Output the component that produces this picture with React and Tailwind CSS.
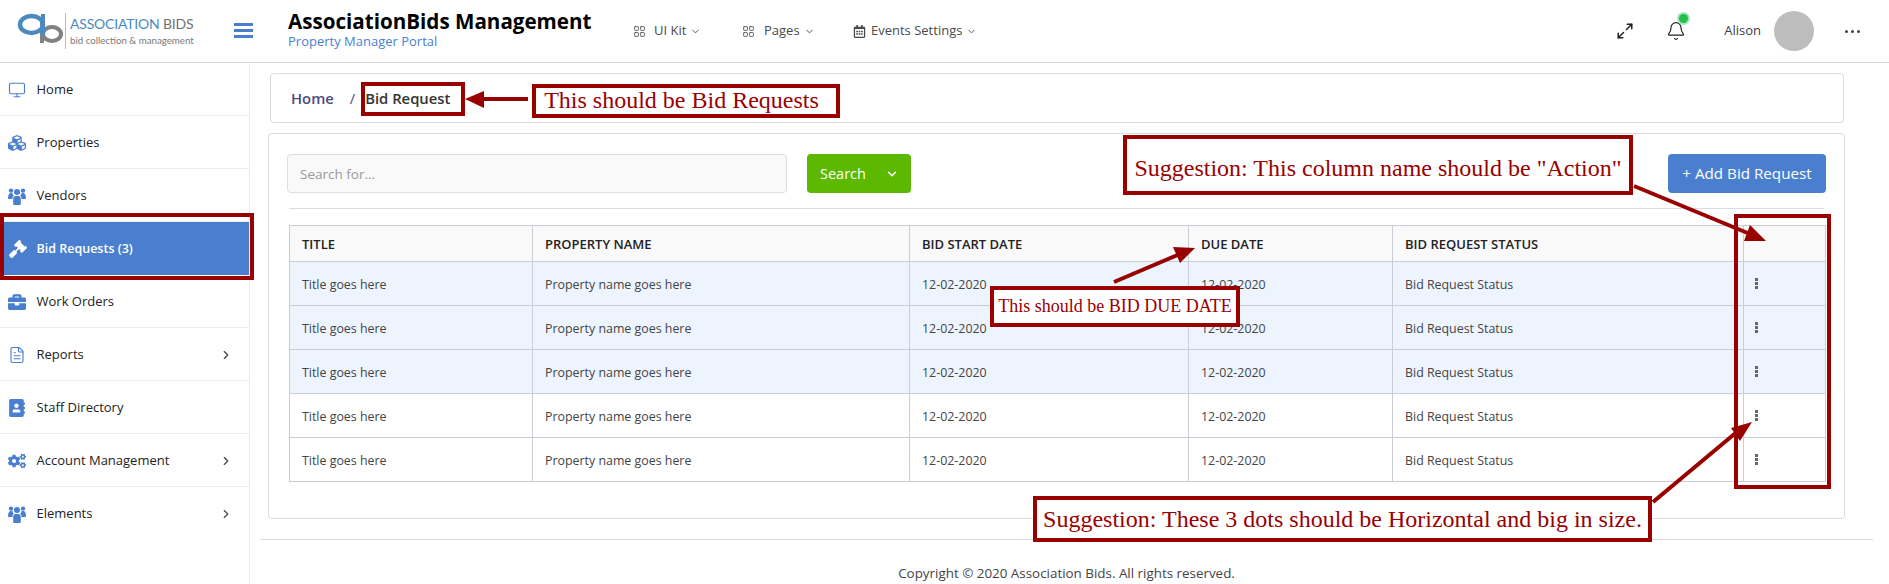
import React from 'react';
import { LayoutGrid, ChevronDown, ChevronRight, Maximize2, Bell, Monitor, FileText } from 'lucide-react';
import { FaCubes, FaGavel, FaBriefcase, FaAddressBook, FaCogs, FaRegCalendarAlt } from 'react-icons/fa';

// the reference's people icon is taller than the FontAwesome one
const PeopleIcon = ({ className }) => (
  <svg width="18" height="18" viewBox="0 0 18 18" fill="currentColor" className={className}>
    <circle cx="9" cy="5" r="3" />
    <circle cx="3" cy="3.6" r="2.2" />
    <circle cx="15" cy="3.6" r="2.2" />
    <path d="M0 11c0-3 1-5 3-5h1.6C4.3 7 5 8 6 8.6 5 9.2 4.6 10.4 4.5 12H1c-.6 0-1-.4-1-1z" />
    <path d="M18 11c0-3-1-5-3-5h-1.6c.3 1-.4 2-1.4 2.6 1 .6 1.4 1.8 1.5 3.4H17c.6 0 1-.4 1-1z" />
    <path d="M5.2 12.5c0-2.4 1-3.5 2.3-3.5h3c1.3 0 2.3 1.1 2.3 3.5V17c0 .6-.4 1-1 1H6.2c-.6 0-1-.4-1-1z" />
  </svg>
);

const sideItems = [
  { label: 'Home', icon: Monitor },
  { label: 'Properties', icon: FaCubes },
  { label: 'Vendors', icon: PeopleIcon },
  { label: 'Bid Requests (3)', icon: FaGavel, active: true },
  { label: 'Work Orders', icon: FaBriefcase },
  { label: 'Reports', icon: FileText, more: true },
  { label: 'Staff Directory', icon: FaAddressBook },
  { label: 'Account Management', icon: FaCogs, more: true },
  { label: 'Elements', icon: PeopleIcon, more: true, last: true },
];

const rows = [true, true, true, false, false];

const Logo = () => (
  <div className="flex items-center pl-[16px] w-[234px] shrink-0">
    <svg width="47" height="32" viewBox="0 0 47 32" className="shrink-0 mt-[-4px]">
      <ellipse cx="36" cy="21" rx="9" ry="7" fill="none" stroke="#7f8183" strokeWidth="4" />
      <rect x="24" y="5" width="4" height="25" fill="#7f8183" />
      <ellipse cx="15.5" cy="11.5" rx="11.5" ry="8.5" fill="none" stroke="#4a8ac0" strokeWidth="4.5" />
      <rect x="25" y="1" width="4" height="21" fill="#4a8ac0" />
    </svg>
    <div className="ml-[2px] h-[36px] w-px bg-[#b9bcbf] shrink-0" />
    <div className="ml-[4px] font-['Lato',sans-serif] whitespace-nowrap">
      <div className="text-[14px] leading-[16px] text-[#4a8ac0] tracking-[-0.2px]">
        ASSOCIATION <span className="text-[#6f7275]">BIDS</span>
      </div>
      <div className="text-[9.7px] leading-[12px] mt-[2px] text-[#77797b]">bid collection &amp; management</div>
    </div>
  </div>
);

const NavLink = ({ icon: Icon, label, className, iconClass }) => (
  <div className={`flex items-center text-[13px] text-[#4a4a4a] ${className}`}>
    <Icon size={13} strokeWidth={1.5} className={`shrink-0 ${iconClass}`} />
    <span>{label}</span>
    <ChevronDown size={11} className="ml-[4px]" />
  </div>
);

const Header = () => (
  <header className="h-[63px] flex items-center border-b border-[#d5dae0] bg-white">
    <Logo />
    <div className="flex flex-col gap-[3px] w-[19px] shrink-0 mt-[-1px]">
      <div className="h-[3px] bg-[#4a7fd0]" />
      <div className="h-[3px] bg-[#4a7fd0]" />
      <div className="h-[3px] bg-[#4a7fd0]" />
    </div>
    <div className="ml-[35px] w-[345px] shrink-0 mt-[-4px]">
      <div className="text-[20.6px] leading-[25px] font-bold text-black whitespace-nowrap">AssociationBids Management</div>
      <div className="text-[13px] leading-[15px] text-[#4a7fd0]">Property Manager Portal</div>
    </div>
    <NavLink icon={LayoutGrid} label="UI Kit" className="w-[109px]" iconClass="mr-[8px]" />
    <NavLink icon={LayoutGrid} label="Pages" className="w-[111px]" iconClass="mr-[9px]" />
    <NavLink icon={FaRegCalendarAlt} label="Events Settings" iconClass="mr-[5px]" />
    <div className="ml-auto flex items-center pr-[29px]">
      <Maximize2 size={18} strokeWidth={2} className="text-[#222]" />
      <div className="relative ml-[32px]">
        <Bell size={20} strokeWidth={1.4} className="text-[#222]" />
        <span className="absolute top-[-7px] right-[-2px] w-[9px] h-[9px] rounded-full bg-[#22c04a] ring-2 ring-[#a8e6b8]" />
      </div>
      <span className="ml-[38px] text-[13px] text-[#3a3a4a]">Alison</span>
      <div className="ml-[13px] w-[40px] h-[40px] rounded-full bg-[#bdbdbd]" />
      <div className="ml-[31px] flex gap-[3px]">
        <span className="w-[3px] h-[3px] rounded-full bg-[#444]" />
        <span className="w-[3px] h-[3px] rounded-full bg-[#444]" />
        <span className="w-[3px] h-[3px] rounded-full bg-[#444]" />
      </div>
    </div>
  </header>
);

const Sidebar = () => (
  <aside className="w-[250px] shrink-0 border-r border-[#eceef1] bg-white">
    {sideItems.map(({ label, icon: Icon, active, more, last }) => (
      <div
        key={label}
        className={`h-[53px] flex items-center pt-[1px] pr-[16px] ${
          active
            ? 'bg-[#4a7fd0] text-white ml-[4px] pl-[5px] text-[12.5px] font-semibold'
            : `pl-[8px] text-[13px] font-medium text-[#222] ${last ? '' : 'border-b border-[#eceef1]'}`
        }`}
      >
        <span className={`shrink-0 ${active ? 'w-[27.5px]' : 'w-[28.5px]'}`}>
          <Icon size={18} strokeWidth={1.5} className={active ? 'text-white' : 'text-[#4a7fd0]'} />
        </span>
        <span>{label}</span>
        {more && <ChevronRight size={14} className="ml-auto text-[#444]" />}
      </div>
    ))}
  </aside>
);

const Th = ({ children }) => (
  <th className="h-[36px] px-[12px] pt-[2px] text-left text-[13px] font-semibold text-[#222] bg-[#f9f9f9] border border-[#c9ced6]">
    {children}
  </th>
);

const Td = ({ children }) => (
  <td className="h-[44px] px-[12px] pt-[3px] text-[12.4px] text-[#444] border border-[#c9ced6]">{children}</td>
);

const RowDots = () => (
  <div className="flex flex-col gap-[1px] w-[3px] ml-[-1px] mt-[-4px]">
    <span className="w-[3px] h-[3px] bg-[#666]" />
    <span className="w-[3px] h-[3px] bg-[#666]" />
    <span className="w-[3px] h-[3px] bg-[#666]" />
  </div>
);

const BidTable = () => (
  <table className="w-[1536px] table-fixed border-collapse">
    <colgroup>
      <col className="w-[243px]" />
      <col className="w-[377px]" />
      <col className="w-[279px]" />
      <col className="w-[204px]" />
      <col className="w-[351px]" />
      <col className="w-[82px]" />
    </colgroup>
    <thead>
      <tr>
        <Th>TITLE</Th>
        <Th>PROPERTY NAME</Th>
        <Th>BID START DATE</Th>
        <Th>DUE DATE</Th>
        <Th>BID REQUEST STATUS</Th>
        <Th />
      </tr>
    </thead>
    <tbody>
      {rows.map((tinted, i) => (
        <tr key={i} className={tinted ? 'bg-[#edf4fe]' : 'bg-white'}>
          <Td>Title goes here</Td>
          <Td>Property name goes here</Td>
          <Td>12-02-2020</Td>
          <Td>12-02-2020</Td>
          <Td>Bid Request Status</Td>
          <Td><RowDots /></Td>
        </tr>
      ))}
    </tbody>
  </table>
);

const Main = () => (
  <main className="flex-1 min-w-0 pl-[10px] pr-[16px]">
    <div className="ml-[10px] mr-[29px] mt-[10px] h-[50px] flex items-center pl-[20px] border border-[#d9dde3] rounded-[4px] text-[14.8px]">
      <span className="font-semibold text-[#4b4b80] mt-[1px]">Home</span>
      <span className="ml-[16px] text-[#4b4b80] mt-[1px]">/</span>
      <span className="ml-[10px] font-semibold text-[#333] mt-[1px]">Bid Request</span>
    </div>
    <div className="ml-[8px] mr-[28px] mt-[10px] h-[386px] border border-[#d9dde3] rounded-[4px] pt-[20px] pl-[20px]">
      <div className="flex h-[39px] w-[1539px] ml-[-2px]">
        <input
          placeholder="Search for..."
          className="w-[500px] h-[39px] pl-[12px] bg-[#f9f9f9] border border-[#dcdfe3] rounded-[4px] text-[13.5px] placeholder:text-[#9a9a9a]"
        />
        <button className="ml-[20px] w-[104px] h-[39px] pl-[13px] flex items-center bg-[#5cb800] text-white text-[14.5px] rounded-[4px]">
          Search
          <ChevronDown size={14} strokeWidth={2.5} className="ml-[19px]" />
        </button>
        <button className="ml-auto w-[158px] h-[39px] bg-[#4a7fd0] text-white text-[15.2px] rounded-[4px]">
          + Add Bid Request
        </button>
      </div>
      <div className="mt-[15px] mb-[16px] h-px bg-[#d9dde3] w-[1535px]" />
      <BidTable />
    </div>
    <div className="mt-[20px] h-px bg-[#d9dde3]" />
    <div className="mt-[23px] text-center text-[13.4px] text-[#444]">Copyright © 2020 Association Bids. All rights reserved.</div>
  </main>
);

// review markup that sits over the page
const Note = ({ className, children }) => (
  <div className={`absolute flex items-center justify-center bg-white border-[4px] border-[#990000] font-['Liberation_Serif',serif] text-[#990000] whitespace-nowrap ${className}`}>
    {children}
  </div>
);

const Box = ({ className }) => <div className={`absolute border-[4px] border-[#990000] ${className}`} />;

const Arrows = () => (
  <svg width="1889" height="584" className="absolute left-0 top-0 pointer-events-none">
    <g fill="#990000" stroke="#990000">
      <line x1="528" y1="99" x2="482" y2="99" strokeWidth="4" />
      <polygon points="465,99 484,91 484,108" stroke="none" />
      <line x1="1634" y1="186" x2="1750" y2="234" strokeWidth="4" />
      <polygon points="1750,225 1766,241 1744,241" stroke="none" />
      <line x1="1114" y1="282" x2="1180" y2="254" strokeWidth="4" />
      <polygon points="1173,247 1195,248 1180,263" stroke="none" />
      <line x1="1653" y1="502" x2="1738" y2="431" strokeWidth="4" />
      <polygon points="1731,428 1752,422 1740,441" stroke="none" />
    </g>
  </svg>
);

const Markup = () => (
  <>
    <Arrows />
    <Box className="left-0 top-[213px] w-[254px] h-[67px]" />
    <Box className="left-[361px] top-[82px] w-[104px] h-[34px]" />
    <Box className="left-[1734px] top-[214px] w-[97px] h-[275px]" />
    <Note className="left-[532px] top-[84px] w-[308px] h-[34px] text-[24px] pr-[9px] pb-[2px]">This should be Bid Requests</Note>
    <Note className="left-[1123px] top-[135px] w-[510px] h-[60px] text-[24px] pt-[5px]">Suggestion: This column name should be "Action"</Note>
    <Note className="left-[990px] top-[286px] w-[250px] h-[41px] text-[18px]">This should be BID DUE DATE</Note>
    <Note className="left-[1033px] top-[496px] w-[619px] h-[46px] text-[24px]">Suggestion: These 3 dots should be Horizontal and big in size.</Note>
  </>
);

export default function App() {
  return (
    <div className="relative w-[1889px] h-[584px] overflow-hidden bg-white font-['Open_Sans',sans-serif]">
      <Header />
      <div className="flex h-[521px]">
        <Sidebar />
        <Main />
      </div>
      <Markup />
    </div>
  );
}
